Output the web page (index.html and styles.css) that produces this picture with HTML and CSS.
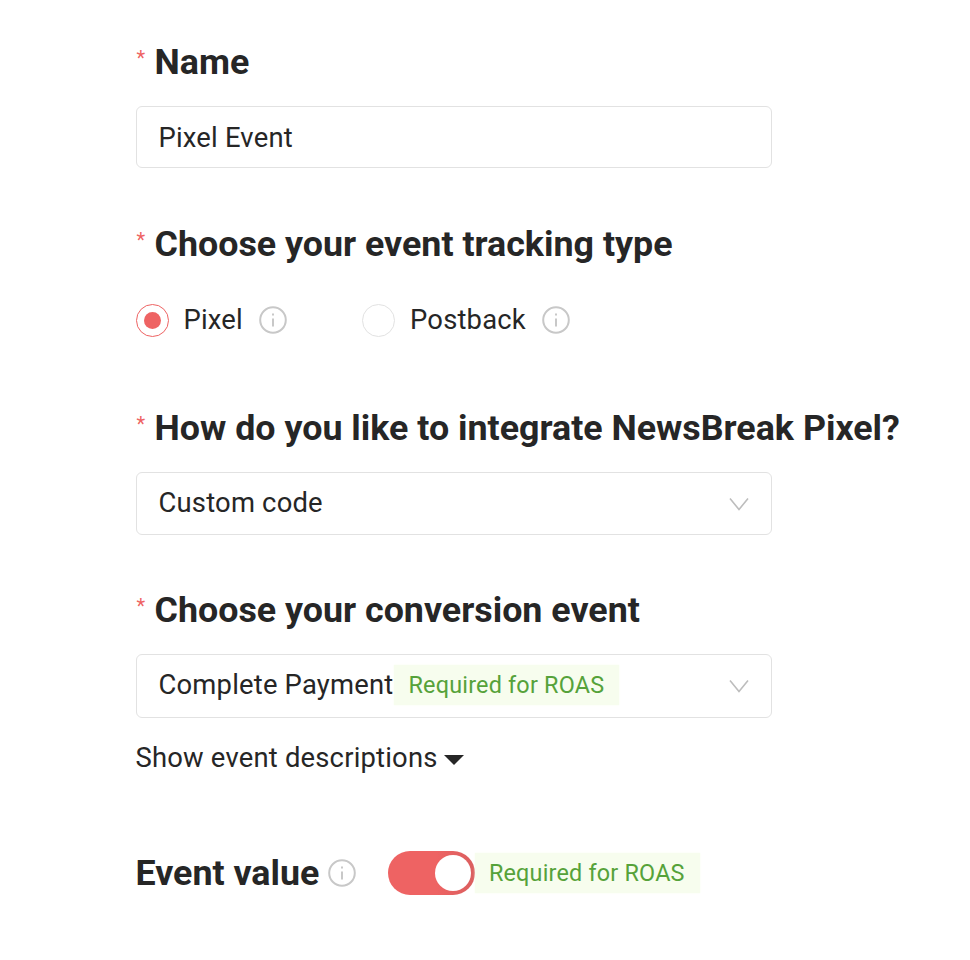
FILE: index.html
```html
<!DOCTYPE html>
<html lang="en">
<head>
    <meta charset="UTF-8">
    <meta name="viewport" content="width=device-width, initial-scale=1.0">
    <title>Pixel Event</title>
    <link rel="stylesheet" href="styles.css">
</head>
<body>
    <form class="form">
        <div class="field field-name">
            <h2 class="label"><span class="star">*</span>Name</h2>
            <div class="input">Pixel Event</div>
        </div>

        <div class="field field-type">
            <h2 class="label"><span class="star">*</span>Choose your event tracking type</h2>
            <div class="radios">
                <div class="radio-item radio-pixel">
                    <span class="radio checked"></span>
                    <span>Pixel</span>
                    <svg class="info" viewBox="0 0 28 28"><circle cx="14" cy="14" r="12.8"/><path d="M14 12.5v8M14 7.5v2"/></svg>
                </div>
                <div class="radio-item">
                    <span class="radio"></span>
                    <span>Postback</span>
                    <svg class="info" viewBox="0 0 28 28"><circle cx="14" cy="14" r="12.8"/><path d="M14 12.5v8M14 7.5v2"/></svg>
                </div>
            </div>
        </div>

        <div class="field field-integrate">
            <h2 class="label"><span class="star">*</span>How do you like to integrate NewsBreak Pixel?</h2>
            <div class="input select">
                <span>Custom code</span>
                <svg class="chevron" viewBox="0 0 20 14"><path d="M1 1.5l9 11 9-11"/></svg>
            </div>
        </div>

        <div class="field field-event">
            <h2 class="label"><span class="star">*</span>Choose your conversion event</h2>
            <div class="input select">
                <span>Complete Payment</span>
                <span class="tag">Required for ROAS</span>
                <svg class="chevron" viewBox="0 0 20 14"><path d="M1 1.5l9 11 9-11"/></svg>
            </div>
            <div class="show-more">Show event descriptions<span class="caret"></span></div>
        </div>

        <div class="value-row">
            <h2 class="value-label">Event value</h2>
            <svg class="info" viewBox="0 0 28 28"><circle cx="14" cy="14" r="12.8"/><path d="M14 12.5v8M14 7.5v2"/></svg>
            <span class="switch"><span class="knob"></span></span>
            <span class="tag tag-switch">Required for ROAS</span>
        </div>
    </form>
</body>
</html>
```

FILE: styles.css
```css
:root{
    --text-color:#262626;
    --red:#ee6363;
    --border-color:#e2e2e2;
}
*{
    box-sizing: border-box;
}
body{
    margin: 0;
    background: #fff;
    color: var(--text-color);
    font-family: Roboto, "Liberation Sans", sans-serif;
    font-size: 27.4px;
    letter-spacing: 0.2px;
}
.form{
    width: 970px;
    height: 960px;
    padding: 42px 0 0 135.5px;
    overflow: hidden;
}
.label{
    margin: 0;
    display: flex;
    align-items: flex-start;
    font-size: 35.8px;
    font-weight: 700;
    line-height: 40px;
    letter-spacing: 0;
    white-space: nowrap;
}
.star{
    width: 19px;
    padding-left: 1px;
    color: var(--red);
    font-size: 20px;
    font-weight: 400;
    line-height: 32px;
}
.input{
    width: 636.5px;
    height: 62px;
    margin-top: 24px;
    padding: 0 22px;
    display: flex;
    align-items: center;
    border: 1.5px solid var(--border-color);
    border-radius: 6px;
}
.field-name .input{
    padding-top: 2px;
}
.field-type{
    margin-top: 56px;
}
.radios{
    margin-top: 36px;
    display: flex;
    height: 40px;
}
.radio-item{
    display: flex;
    align-items: center;
}
.radio-pixel{
    width: 226.5px;
}
.radio{
    width: 33px;
    height: 33px;
    margin-right: 15px;
    display: flex;
    align-items: center;
    justify-content: center;
    border: 1.5px solid var(--border-color);
    border-radius: 50%;
}
.radio.checked{
    border-color: var(--red);
}
.radio.checked::after{
    content: "";
    width: 17px;
    height: 17px;
    border-radius: 50%;
    background: var(--red);
}
.info{
    width: 28px;
    height: 28px;
    margin-left: 16px;
    fill: none;
    stroke: #c8c8c8;
    stroke-width: 2;
}
.field-integrate{
    margin-top: 68px;
}
.field-integrate .input{
    height: 63px;
    padding-bottom: 1px;
}
.field-event{
    margin-top: 55px;
}
.field-event .input{
    height: 64px;
    padding-bottom: 2px;
}
.select{
    position: relative;
}
.chevron{
    position: absolute;
    right: 22px;
    top: 50%;
    width: 20px;
    height: 14px;
    margin-top: -7px;
    fill: none;
    stroke: #bdbdbd;
    stroke-width: 1.6;
}
.tag{
    height: 40px;
    margin-left: 1px;
    padding: 0 15px 0 14px;
    display: inline-flex;
    align-items: center;
    background: #f7fdee;
    box-shadow: 0 0 2px #f7fdee;
    color: #56a23a;
    font-size: 23.4px;
}
.show-more{
    margin-top: 24px;
    display: flex;
    align-items: center;
    line-height: 32px;
}
.caret{
    margin-left: 6px;
    margin-top: 4px;
    border-top: 10px solid var(--text-color);
    border-left: 10px solid transparent;
    border-right: 10px solid transparent;
}
.value-row{
    margin-top: 76px;
    display: flex;
    align-items: center;
}
.value-label{
    margin: 0;
    font-size: 35.8px;
    font-weight: 700;
    line-height: 46px;
    letter-spacing: 0;
}
.value-row .info{
    margin-left: 9px;
}
.switch{
    width: 87px;
    height: 44px;
    margin-left: 32px;
    padding: 4px;
    display: flex;
    justify-content: flex-end;
    border-radius: 22px;
    background: linear-gradient(90deg, var(--red) 55%, #da5f5f);
}
.knob{
    width: 36px;
    height: 36px;
    border-radius: 50%;
    background: #fff;
}
.tag-switch{
    margin-left: 0;
    padding-left: 13.5px;
}
```
